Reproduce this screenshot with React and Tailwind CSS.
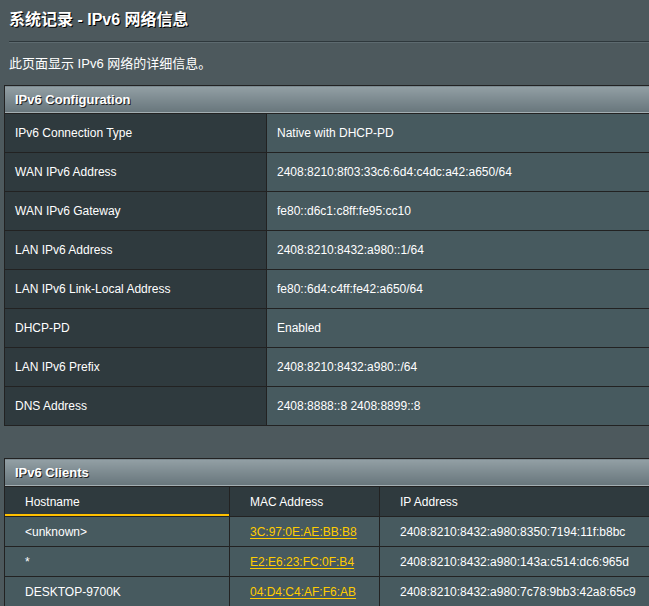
import React from 'react';

const config = [
  ['IPv6 Connection Type', 'Native with DHCP-PD'],
  ['WAN IPv6 Address', '2408:8210:8f03:33c6:6d4:c4dc:a42:a650/64'],
  ['WAN IPv6 Gateway', 'fe80::d6c1:c8ff:fe95:cc10'],
  ['LAN IPv6 Address', '2408:8210:8432:a980::1/64'],
  ['LAN IPv6 Link-Local Address', 'fe80::6d4:c4ff:fe42:a650/64'],
  ['DHCP-PD', 'Enabled'],
  ['LAN IPv6 Prefix', '2408:8210:8432:a980::/64'],
  ['DNS Address', '2408:8888::8 2408:8899::8'],
];

const clients = [
  ['<unknown>', '3C:97:0E:AE:BB:B8', '2408:8210:8432:a980:8350:7194:11f:b8bc'],
  ['*', 'E2:E6:23:FC:0F:B4', '2408:8210:8432:a980:143a:c514:dc6:965d'],
  ['DESKTOP-9700K', '04:D4:C4:AF:F6:AB', '2408:8210:8432:a980:7c78:9bb3:42a8:65c9'],
];

const headerBar =
  'h-[28px] px-[10px] text-[13px] font-bold text-white [text-shadow:1px_1px_0_#222] bg-gradient-to-b from-[#93a0a5] to-[#66747a] shadow-[inset_0_-1px_0_#a3aeb2] align-middle text-left';

export default function App() {
  return (
    <div className="h-[606px] w-full overflow-hidden bg-[#4d595d] text-white font-['Liberation_Sans','Noto_Sans_CJK_SC',sans-serif]">
      {/* Title */}
      <div className="pl-[9px] pt-[9px] text-[16px] font-bold leading-[22px] [text-shadow:1px_1px_0_#000]">
        系统记录 - IPv6 网络信息
      </div>
      <div className="ml-[9px] mt-[10px] h-[2px] border-t border-t-[#2e383c] bg-[#5d6a6f]"></div>
      <div className="ml-[9px] mt-[12px] text-[13px] leading-[18px]">
        此页面显示 IPv6 网络的详细信息。
      </div>

      {/* IPv6 Configuration */}
      <table className="ml-[4px] mt-[12px] w-[760px] table-fixed border-collapse border border-[#222] text-[12px]">
        <colgroup>
          <col className="w-[262px]" />
          <col />
        </colgroup>
        <thead>
          <tr>
            <th colSpan={2} className={headerBar}>IPv6 Configuration</th>
          </tr>
        </thead>
        <tbody>
          {config.map(([k, v]) => (
            <tr key={k} className="h-[39px]">
              <td className="border border-[#222] bg-[#2f3a3e] px-[10px] align-middle">{k}</td>
              <td className="border border-[#222] bg-[#475a5f] px-[10px] align-middle">{v}</td>
            </tr>
          ))}
        </tbody>
      </table>

      {/* IPv6 Clients */}
      <table className="ml-[4px] mt-[32px] w-[760px] table-fixed border-collapse border border-[#222] text-[12px]">
        <colgroup>
          <col className="w-[225px]" />
          <col className="w-[150px]" />
          <col />
        </colgroup>
        <thead>
          <tr>
            <th colSpan={3} className={headerBar}>IPv6 Clients</th>
          </tr>
          <tr className="h-[30px] bg-[#2f3a3e] text-left">
            <th className="border border-[#222] pl-[20px] font-normal shadow-[inset_0_-2px_0_#ffc000]">Hostname</th>
            <th className="border border-[#222] pl-[20px] font-normal">MAC Address</th>
            <th className="border border-[#222] pl-[20px] font-normal">IP Address</th>
          </tr>
        </thead>
        <tbody>
          {clients.map(([h, m, ip]) => (
            <tr key={m} className="h-[30px] bg-[#475a5f]">
              <td className="border border-[#222] pl-[20px]">{h}</td>
              <td className="border border-[#222] pl-[20px]">
                <span className="cursor-pointer text-[#ffcc00] underline underline-offset-[2px]">{m}</span>
              </td>
              <td className="border border-[#222] pl-[20px]">{ip}</td>
            </tr>
          ))}
        </tbody>
      </table>
    </div>
  );
}
